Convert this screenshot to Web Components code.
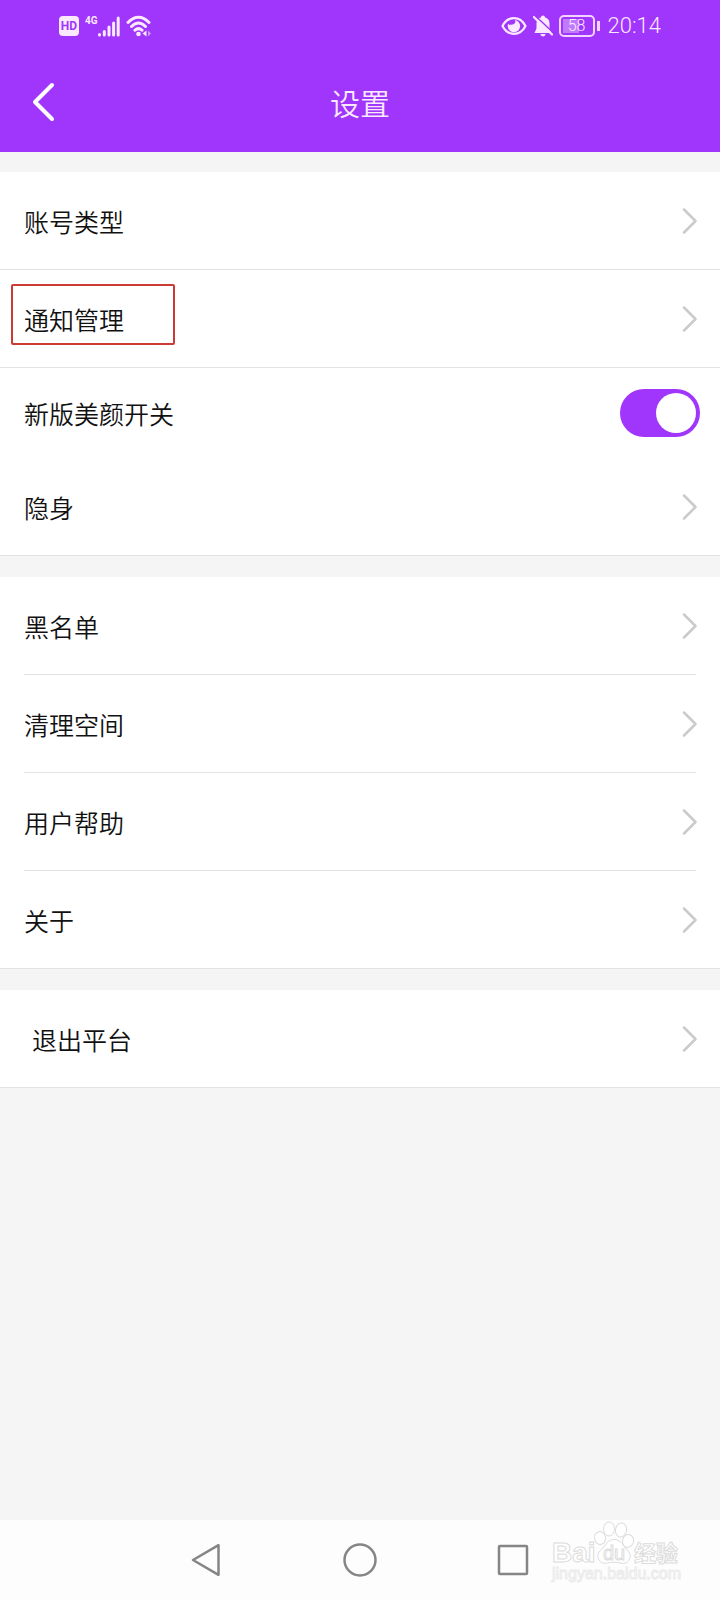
<!DOCTYPE html>
<html lang="zh-CN">
<head>
<meta charset="UTF-8">
<meta name="viewport" content="width=device-width, initial-scale=1">
<title>设置</title>
<style>
  body {
    margin: 0;
    background-color: #f5f5f5;
    color: #111;
    font-family: "Noto Sans CJK SC", sans-serif;
    font-weight: 350;
  }
</style>
</head>
<body>
<settings-page>
  <status-bar slot="header" time="20:14" battery="58"></status-bar>
  <title-bar slot="header">设置</title-bar>

  <settings-group>
    <settings-row>账号类型</settings-row>
    <settings-row marked>通知管理</settings-row>
    <switch-row checked>新版美颜开关</switch-row>
    <settings-row>隐身</settings-row>
  </settings-group>

  <settings-group>
    <settings-row inset>黑名单</settings-row>
    <settings-row inset>清理空间</settings-row>
    <settings-row inset>用户帮助</settings-row>
    <settings-row>关于</settings-row>
  </settings-group>

  <settings-group>
    <settings-row indent>退出平台</settings-row>
  </settings-group>

  <nav-bar slot="footer"></nav-bar>
</settings-page>

<script>
class SettingsPage extends HTMLElement {
  constructor() {
    super()
    this.attachShadow({ mode: "open" })
    this.shadowRoot.innerHTML = `
    <style>
      :host {
        display: flex;
        flex-direction: column;
        min-height: 100vh;
      }

      header {
        background-color: #a035fc;
        color: #fbe9ff;
      }

      main {
        flex: 1;
        display: flex;
        flex-direction: column;
        gap: 21px;
        padding: 20px 0;
      }
    </style>

    <header><slot name="header"></slot></header>
    <main><slot></slot></main>
    <slot name="footer"></slot>
  `
  }
}

class StatusBar extends HTMLElement {
  constructor() {
    super()
    this.attachShadow({ mode: "open" })
    this.render()
  }

  render() {
    const time = this.getAttribute("time")
    const battery = this.getAttribute("battery")

    this.shadowRoot.innerHTML = `
    <style>
      :host {
        display: flex;
        justify-content: space-between;
        align-items: center;
        height: 52px;
        padding: 0 59px;
        font-family: Roboto, sans-serif;
        font-weight: 300;
      }

      .side {
        display: flex;
        align-items: center;
        gap: 6px;
      }

      svg {
        display: block;
      }

      .hd {
        width: 20px;
        line-height: 20px;
        border-radius: 4px;
        background-color: #fbe9ff;
        color: #a035fc;
        font-size: 12px;
        font-weight: 700;
        text-align: center;
      }

      .signal {
        display: flex;
        align-items: flex-start;
      }

      .signal span {
        font-size: 10px;
        line-height: 10px;
        font-weight: 700;
      }

      .battery {
        display: flex;
        align-items: center;
        gap: 2px;
      }

      .cell {
        box-sizing: border-box;
        width: 36px;
        height: 22px;
        padding: 2px;
        border: 2px solid #f3d3ff;
        border-radius: 5px;
      }

      .level {
        height: 100%;
        line-height: 14px;
        font-size: 16px;
        text-align: center;
        background: linear-gradient(to right, #c07bfd ${battery}%, transparent ${battery}%);
      }

      .cap {
        width: 3px;
        height: 10px;
        background-color: #f3d3ff;
      }

      time {
        margin-left: 2px;
        font-size: 22px;
        line-height: 28px;
      }
    </style>

    <div class="side">
      <span class="hd">HD</span>
      <div class="signal">
        <span>4G</span>
        <svg viewBox="0 0 22 21" width="22" height="21" stroke="#fbe9ff" stroke-width="3" stroke-linecap="round">
          <path d="M1.5 18.5v.5M6.3 15.5v3.5M11 11v8M15.6 7v12M20.2 2v17" />
        </svg>
      </div>
      <svg viewBox="0 0 26 22" width="26" height="22" fill="none" stroke="#fbe9ff" stroke-width="3" stroke-linecap="round">
        <path d="M2 7.5C8.500 .5 16.500 .5 23 7.500M5.500 11.500c4.500-4.500 9.500-4.500 14 0M9 15.200c2.200-2 4.800-2 7 0" />
        <circle cx="12.500" cy="19" r="2.300" fill="#fbe9ff" stroke="none" />
        <path d="M20.500 15.500v6l-4-3z" fill="#fbe9ff" stroke="none" />
        <path d="M22 15.500l3 3-3 3z" fill="#cf94fd" stroke="none" />
      </svg>
    </div>

    <div class="side">
      <svg viewBox="0 0 26 20" width="26" height="20" fill="none" stroke="#fbe9ff">
        <path d="M1.500 10C7 -.5 19 -.5 24.500 10 19 20.500 7 20.500 1.500 10z" stroke-width="2.200" />
        <path d="M11 8.500a2.800 2.800 0 0 0 2.600-4.600 6.200 6.200 0 1 1-6.500 4c1 .8 2.500 1.200 3.900.6z" fill="#fbe9ff" stroke="none" />
      </svg>
      <svg viewBox="0 0 20 22" width="20" height="22" fill="#fbe9ff">
        <path d="M10 .5c1.200 0 1.800.8 1.900 1.700 3 .8 4.600 3.200 4.600 6.300v5l2 4.500h-17l2-4.500v-5c0-3.100 1.600-5.500 4.600-6.300C8.200 1.300 8.800.5 10 .5zM7.500 19h5c0 3.200-5 3.200-5 0z" />
        <path d="M2.500 1L20 17.500" stroke="#a035fc" stroke-width="1.500" />
        <path d="M.8 2L19 19.500" stroke="#fbe9ff" stroke-width="2.200" stroke-linecap="round" />
      </svg>
      <div class="battery">
        <div class="cell"><div class="level">${battery}</div></div>
        <div class="cap"></div>
      </div>
      <time>${time}</time>
    </div>
  `
  }
}

class TitleBar extends HTMLElement {
  constructor() {
    super()
    this.attachShadow({ mode: "open" })
    this.shadowRoot.innerHTML = `
    <style>
      :host {
        display: grid;
        grid-template-columns: 88px 1fr 88px;
        align-items: center;
        height: 100px;
      }

      button {
        height: 100px;
        padding: 0;
        border: 0;
        background: none;
        cursor: pointer;
      }

      svg {
        display: block;
        margin: 0 auto;
      }

      h1 {
        margin: 0;
        font-size: 30px;
        line-height: 44px;
        font-weight: inherit;
        text-align: center;
      }
    </style>

    <button aria-label="返回">
      <svg viewBox="0 0 24 40" width="24" height="40">
        <path d="M20 3L3 20L20 37" fill="none" stroke="#fff" stroke-width="4" stroke-linecap="round" stroke-linejoin="round" />
      </svg>
    </button>
    <h1><slot></slot></h1>
  `
  }
}

class SettingsGroup extends HTMLElement {
  constructor() {
    super()
    this.attachShadow({ mode: "open" })
    this.shadowRoot.innerHTML = `
    <style>
      :host {
        display: block;
        background-color: #fff;
      }
    </style>

    <slot></slot>
  `
  }
}

class SettingsRow extends HTMLElement {
  constructor() {
    super()
    this.attachShadow({ mode: "open" })
    this.shadowRoot.innerHTML = `
    <style>
      :host {
        display: block;
        position: relative;
        border-bottom: 1px solid #e2e2e2;
      }

      :host([inset]) {
        margin: 0 24px;
      }

      a {
        display: flex;
        justify-content: space-between;
        align-items: center;
        height: 97px;
        padding: 0 22px 0 24px;
        color: inherit;
        text-decoration: none;
        font-size: 25px;
        line-height: 36px;
      }

      :host([inset]) a {
        margin: 0 -24px;
      }

      :host([indent]) a {
        padding-left: 32px;
      }

      .mark {
        display: none;
        position: absolute;
        top: 14px;
        left: 11px;
        box-sizing: border-box;
        width: 164px;
        height: 61px;
        border: 2px solid #cb3a34;
        border-radius: 2px;
        pointer-events: none;
      }

      :host([marked]) .mark {
        display: block;
      }
    </style>

    <a href="#">
      <span><slot></slot></span>
      <svg viewBox="0 0 16 26" width="16" height="26">
        <path d="M2 1.500L13.500 13L2 24.500" fill="none" stroke="#cbcbcb" stroke-width="2.500" stroke-linecap="round" stroke-linejoin="round" />
      </svg>
    </a>
    <div class="mark"></div>
  `
  }
}

class SwitchRow extends HTMLElement {
  constructor() {
    super()
    this.attachShadow({ mode: "open" })
    const checked = this.hasAttribute("checked") ? "checked" : ""
    this.shadowRoot.innerHTML = `
    <style>
      :host {
        display: block;
      }

      label {
        display: flex;
        justify-content: space-between;
        align-items: center;
        height: 90px;
        padding: 0 20px 0 24px;
        font-size: 25px;
        line-height: 36px;
      }

      input {
        appearance: none;
        display: flex;
        box-sizing: border-box;
        width: 80px;
        height: 48px;
        margin: 0;
        padding: 4px;
        border-radius: 24px;
        background-color: #d5d5d5;
        cursor: pointer;
      }

      input::before {
        content: "";
        width: 40px;
        height: 40px;
        border-radius: 50%;
        background-color: #fff;
      }

      input:checked {
        justify-content: flex-end;
        background-color: #a035fc;
      }
    </style>

    <label for="toggle">
      <span><slot></slot></span>
      <input type="checkbox" id="toggle" role="switch" ${checked}>
    </label>
  `
  }
}

class NavBar extends HTMLElement {
  constructor() {
    super()
    this.attachShadow({ mode: "open" })
    this.shadowRoot.innerHTML = `
    <style>
      :host {
        display: block;
        position: relative;
        background-color: #fdfdfd;
      }

      nav {
        display: flex;
        justify-content: center;
        align-items: center;
        gap: 106px;
        height: 80px;
      }

      button {
        width: 48px;
        height: 48px;
        padding: 6px;
        border: 0;
        background: none;
        cursor: pointer;
      }

      button svg {
        display: block;
        fill: none;
        stroke: #858585;
        stroke-width: 2.5;
        stroke-linejoin: round;
      }

      .brand {
        position: absolute;
        right: 36px;
        bottom: 12px;
      }
    </style>

    <nav>
      <button aria-label="返回">
        <svg viewBox="0 0 36 36" width="36" height="36"><path d="M30.500 3.200v29.600L5 18z" /></svg>
      </button>
      <button aria-label="主页">
        <svg viewBox="0 0 36 36" width="36" height="36"><circle cx="18" cy="18" r="15.500" /></svg>
      </button>
      <button aria-label="最近任务">
        <svg viewBox="0 0 36 36" width="36" height="36"><rect x="3" y="4" width="28" height="28" rx="1" /></svg>
      </button>
    </nav>

    <svg class="brand" viewBox="0 0 134 68" width="134" height="68" fill="#fff" stroke="#dcdcdc" stroke-width="1">
      <g font-family="Liberation Sans, sans-serif" font-weight="700">
        <text x="2" y="42" font-size="28">Bai</text>
        <text x="84" y="41" font-size="22" font-family="Noto Sans CJK SC, sans-serif">经验</text>
      </g>
      <ellipse cx="50" cy="18" rx="5.500" ry="6.500" transform="rotate(-12 50 18)" />
      <ellipse cx="59" cy="9" rx="5.500" ry="7" />
      <ellipse cx="71" cy="10" rx="5.500" ry="7" transform="rotate(10 71 10)" />
      <ellipse cx="78" cy="21" rx="5.500" ry="6.500" transform="rotate(15 78 21)" />
      <path d="M64 19.500c6 0 8.500 4.500 11 8 3 3.500 6 6 5 10-1.200 5-5.500 6.500-9 5.500-5-1-9-1-14 0-4 1-8-1-9-5.500-.8-4 2-7 5-9.500 3-3.500 5-8.500 11-8.500z" />
      <text x="53" y="40" font-size="20" font-family="Liberation Sans, sans-serif">du</text>
      <text x="2" y="59" font-size="16" font-family="Liberation Sans, sans-serif" stroke="#ebebeb">jingyan.baidu.com</text>
    </svg>
  `
  }
}

customElements.define("settings-page", SettingsPage)
customElements.define("status-bar", StatusBar)
customElements.define("title-bar", TitleBar)
customElements.define("settings-group", SettingsGroup)
customElements.define("settings-row", SettingsRow)
customElements.define("switch-row", SwitchRow)
customElements.define("nav-bar", NavBar)
</script>
</body>
</html>
